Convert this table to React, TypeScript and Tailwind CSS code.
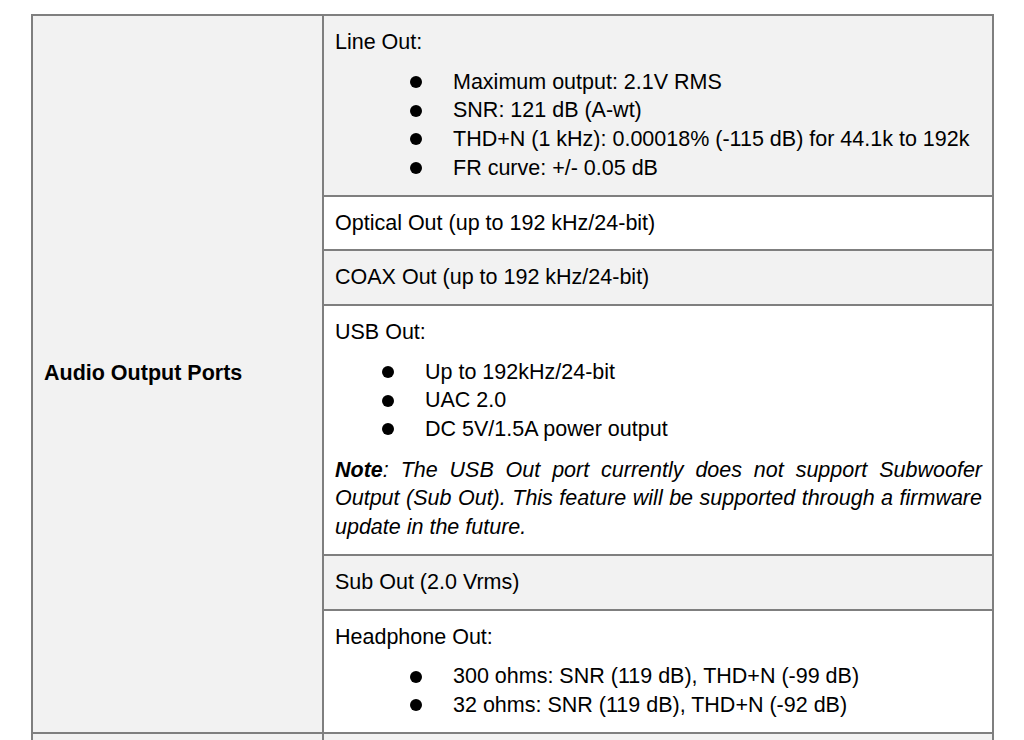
import type { ReactNode } from 'react'

const LINE_OUT = [
  'Maximum output: 2.1V RMS',
  'SNR: 121 dB (A-wt)',
  'THD+N (1 kHz): 0.00018% (-115 dB) for 44.1k to 192k',
  'FR curve: +/- 0.05 dB',
]

const USB_OUT = ['Up to 192kHz/24-bit', 'UAC 2.0', 'DC 5V/1.5A power output']

const HEADPHONE_OUT = ['300 ohms: SNR (119 dB), THD+N (-99 dB)', '32 ohms: SNR (119 dB), THD+N (-92 dB)']

function Bullets({ items, indent }: { items: string[]; indent: 'wide' | 'narrow' }) {
  return (
    <ul className={`mt-[11px] ${indent === 'wide' ? 'pl-[75px]' : 'pl-[47px]'}`}>
      {items.map((item) => (
        <li key={item} className="flex items-center">
          <span className="w-[12px] h-[12px] rounded-full bg-black shrink-0" />
          <span className="ml-[31px]">{item}</span>
        </li>
      ))}
    </ul>
  )
}

function Row({ children, gray, last }: { children: ReactNode; gray?: boolean; last?: boolean }) {
  return (
    <div
      className={`pl-[11px] pr-[10px] py-3 ${gray ? 'bg-[#f2f2f2]' : 'bg-white'} ${
        last ? '' : 'border-b-2 border-[#7f7f7f]'
      }`}
    >
      {children}
    </div>
  )
}

export default function App() {
  return (
    <div
      className="h-[740px] overflow-hidden bg-white text-black text-[21.5px] leading-[28.7px]"
      style={{ fontFamily: '"Liberation Sans", Arial, sans-serif' }}
    >
      <div className="mt-[14px] ml-[31px] w-[963px] border-t-2 border-x-2 border-[#7f7f7f]">
        {/* Audio Output Ports */}
        <div className="flex border-b-2 border-[#7f7f7f]">
          <div className="w-[291px] shrink-0 flex items-center pl-[11px] bg-[#f2f2f2] border-r-2 border-[#7f7f7f] font-bold">
            Audio Output Ports
          </div>
          <div className="flex-1 flex flex-col">
            <Row gray>
              <div>Line Out:</div>
              <Bullets items={LINE_OUT} indent="wide" />
            </Row>
            <Row>Optical Out (up to 192 kHz/24-bit)</Row>
            <Row gray>COAX Out (up to 192 kHz/24-bit)</Row>
            <Row>
              <div>USB Out:</div>
              <Bullets items={USB_OUT} indent="narrow" />
              <p className="mt-3 italic text-justify">
                <b>Note</b>: The USB Out port currently does not support Subwoofer Output (Sub Out). This
                feature will be supported through a firmware update in the future.
              </p>
            </Row>
            <Row gray>Sub Out (2.0 Vrms)</Row>
            <Row last>
              <div>Headphone Out:</div>
              <Bullets items={HEADPHONE_OUT} indent="wide" />
            </Row>
          </div>
        </div>

        {/* next row, cut off by the page edge */}
        <div className="flex h-[60px]">
          <div className="w-[291px] shrink-0 bg-[#f2f2f2] border-r-2 border-[#7f7f7f]" />
          <div className="flex-1 bg-[#f2f2f2]" />
        </div>
      </div>
    </div>
  )
}
